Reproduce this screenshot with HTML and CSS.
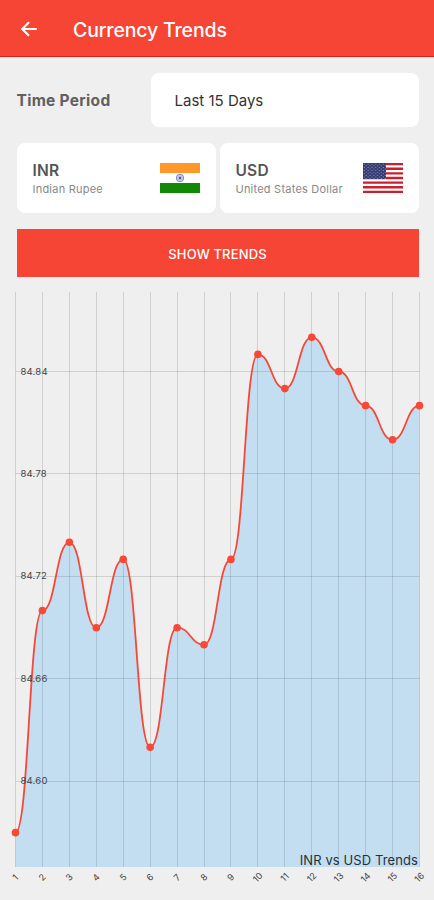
FILE: index.html
```
<!DOCTYPE html>
<html lang="en">

<head>
    <meta charset="UTF-8">
    <meta name="viewport" content="width=device-width, initial-scale=1.0">
    <title>Currency Trends</title>
    <link rel="stylesheet" href="styles.css">
</head>

<body>
    <header class="topbar">
        <svg class="back" viewBox="0 0 18 18">
            <path d="M16.8 9H2.6M9 2.3L2.3 9l6.7 6.7" />
        </svg>
        <h1>Currency Trends</h1>
    </header>
    <main>
        <div class="period">
            <span class="period-label">Time Period</span>
            <div class="period-select"><span>Last 15 Days</span></div>
        </div>
        <div class="currencies">
            <div class="card">
                <div>
                    <div class="code">INR</div>
                    <div class="name">Indian Rupee</div>
                </div>
                <svg class="flag" viewBox="0 0 40 30">
                    <rect width="40" height="10" fill="#ff9829" />
                    <rect y="10" width="40" height="10" fill="#fff" />
                    <rect y="20" width="40" height="10" fill="#128807" />
                    <circle cx="20" cy="15" r="3.7" fill="#dcdcf2" stroke="#7776bb" stroke-width="0.9" />
                    <path d="M20 11.5v7M16.5 15h7M17.5 12.5l5 5M22.5 12.5l-5 5" stroke="#8584c4" stroke-width="0.4" />
                    <circle cx="20" cy="15" r="1.2" fill="#4c4b9c" />
                </svg>
            </div>
            <div class="card">
                <div>
                    <div class="code">USD</div>
                    <div class="name">United States Dollar</div>
                </div>
                <svg class="flag" viewBox="0 0 40 30">
                    <defs>
                        <pattern id="stars" width="3.8" height="3.2" patternUnits="userSpaceOnUse">
                            <circle cx="1.2" cy="1" r="0.5" fill="#bfc4df" />
                            <circle cx="3.1" cy="2.6" r="0.5" fill="#bfc4df" />
                        </pattern>
                    </defs>
                    <rect width="40" height="30" fill="#fff" />
                    <path d="M0 1.15h40M0 5.77h40M0 10.38h40M0 15h40M0 19.62h40M0 24.23h40M0 28.85h40" stroke="#c9202f" stroke-width="2.3" />
                    <rect width="23" height="16" fill="#343b72" />
                    <rect width="23" height="16" fill="url(#stars)" />
                </svg>
            </div>
        </div>
        <button type="button" class="show">SHOW TRENDS</button>
    </main>
    <svg id="chart" class="chart" viewBox="0 0 434 610"></svg>
    <script src="script.js"></script>
</body>

</html>
```
FILE: styles.css
```
* {
    box-sizing: border-box;
}
body {
    margin: 0;
    height: 900px;
    overflow: hidden;
    background-color: #efefef;
    font-family: Inter, "Open Sans", sans-serif;
    color: #333;
}
.topbar {
    display: flex;
    align-items: center;
    height: 57px;
    padding: 2px 20px 0;
    background-color: #f64435;
    border-bottom: 1px solid #e51c17;
}
.back {
    width: 18px;
    height: 18px;
    fill: none;
    stroke: #fff;
    stroke-width: 2.2;
}
h1 {
    margin: 2px 0 0 35px;
    font-size: 19.5px;
    font-weight: 500;
    letter-spacing: -0.15px;
    color: #fff;
}
main {
    padding: 16px 15.5px 0 16.5px;
}
.period {
    display: flex;
    align-items: center;
}
.period-label {
    width: 134px;
    font-size: 15.5px;
    font-weight: 700;
    letter-spacing: 0.3px;
    color: #606060;
}
.period-select {
    display: flex;
    align-items: center;
    flex: 1;
    height: 54px;
    padding: 1px 0 0 24px;
    font-size: 15px;
    background-color: #fff;
    border-radius: 8px;
}
.currencies {
    display: grid;
    grid-template-columns: 1fr 1fr;
    gap: 4px;
    margin-top: 16px;
}
.card {
    display: flex;
    justify-content: space-between;
    align-items: center;
    height: 70px;
    padding: 0 16px;
    background-color: #fff;
    border-radius: 8px;
}
.code {
    margin-top: 2px;
    font-size: 15.5px;
    font-weight: 600;
    line-height: 20px;
    letter-spacing: 0.2px;
    color: #555;
}
.name {
    font-size: 11px;
    line-height: 16px;
    letter-spacing: 0.22px;
    color: #888;
    white-space: nowrap;
}
.flag {
    flex-shrink: 0;
    width: 40px;
    height: 30px;
}
.show {
    display: block;
    width: 100%;
    height: 48px;
    margin-top: 16px;
    padding: 2px 0 0;
    font-family: inherit;
    font-size: 13px;
    font-weight: 500;
    letter-spacing: 0.15px;
    color: #fff;
    background-color: #f64435;
    border: none;
}
.chart {
    display: block;
    width: 434px;
    height: 610px;
    margin-top: 13px;
}
.grid {
    stroke: #646464;
    stroke-opacity: 0.22;
}
.area {
    fill: #c3def1;
}
.line {
    fill: none;
    stroke: #f64838;
    stroke-width: 1.8;
}
.dot {
    fill: #f94835;
}
.y-label {
    font-size: 9.5px;
    letter-spacing: 0.2px;
    fill: #444;
}
.x-label {
    font-size: 9px;
    fill: #444;
    text-anchor: middle;
}
.caption {
    font-size: 13px;
    letter-spacing: 0.1px;
    fill: #26323b;
    text-anchor: end;
}
```
FILE: script.js
```
const rates = [84.57, 84.70, 84.74, 84.69, 84.73, 84.62, 84.69, 84.68, 84.73, 84.85, 84.83, 84.86, 84.84, 84.82, 84.80, 84.82];
const ticks = [84.84, 84.78, 84.72, 84.66, 84.60];
const left = 15.5;
const right = 419.5;
const chartTop = 2;
const bottom = 577;
const step = (right - left) / (rates.length - 1);

const getX = i => left + i * step;
const getY = rate => 81.5 + (84.84 - rate) * 1708;

// smooth line, flat at every point
let line = `M${getX(0)} ${getY(rates[0])}`;
for (let i = 1; i < rates.length; i++) {
    const mid = (getX(i - 1) + getX(i)) / 2;
    line += `C${mid} ${getY(rates[i - 1])} ${mid} ${getY(rates[i])} ${getX(i)} ${getY(rates[i])}`;
}

let html = `<path class="area" d="${line}V${bottom}H${left}Z" />`;
rates.forEach((rate, i) => {
    const x = Math.floor(getX(i)) + 0.5;
    html += `<line class="grid" x1="${x}" y1="${chartTop}" x2="${x}" y2="${bottom}" />`;
    html += `<text class="x-label" transform="translate(${getX(i)} 587.5) rotate(-45)" y="3">${i + 1}</text>`;
});
ticks.forEach(tick => {
    const y = Math.floor(getY(tick)) + 0.5;
    html += `<line class="grid" x1="${left}" y1="${y}" x2="${right}" y2="${y}" />`;
});
html += `<path class="line" d="${line}" />`;
ticks.forEach(tick => {
    html += `<text class="y-label" x="20.5" y="${getY(tick) + 3}">${tick.toFixed(2)}</text>`;
});
rates.forEach((rate, i) => {
    html += `<circle class="dot" cx="${getX(i)}" cy="${getY(rate)}" r="3.8" />`;
});
html += `<text class="caption" x="418" y="575">INR vs USD Trends</text>`;

document.getElementById('chart').innerHTML = html;
```
